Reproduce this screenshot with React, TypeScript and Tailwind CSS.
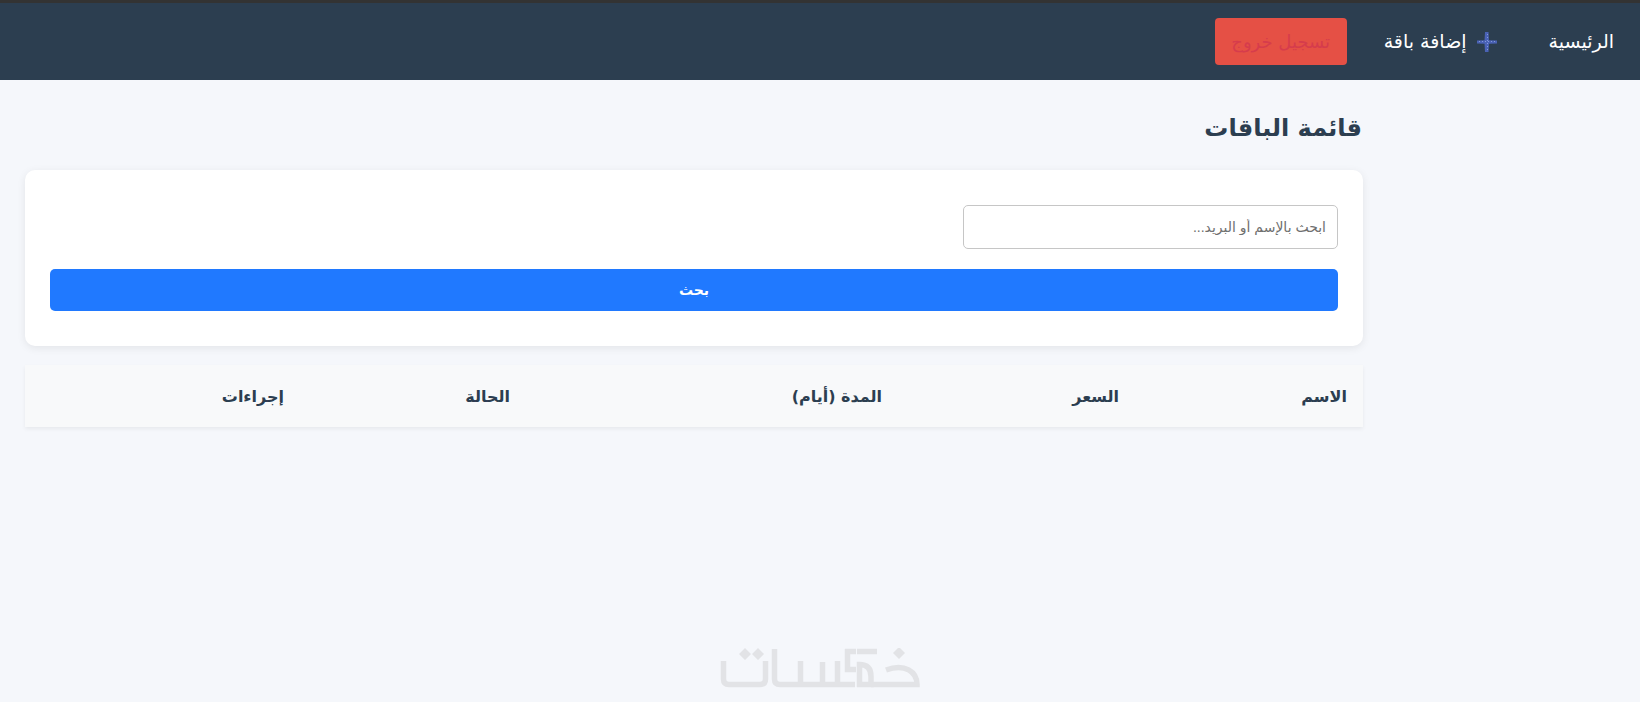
import React from "react";

const font = { fontFamily: '"DejaVu Sans", "Noto Sans", sans-serif' };

function Plus() {
  return (
    <svg width="20" height="20" viewBox="0 0 20 20" className="shrink-0">
      <path d="M8 0h3.500l.5 8.200 8 .2v3.200l-8 .2-.5 8.200H8l-.5-8.200-7.500-.2V8.400l7.500-.2z" fill="#4a62b5" />
      <path d="M10.500 2v16M2 9.500h16" stroke="#9fb0e8" strokeWidth="0.700" strokeDasharray="1 2" fill="none" />
    </svg>
  );
}

function Logo() {
  return (
    <svg width="200" height="42" viewBox="0 0 200 42" fill="none" stroke="#e2e3e6" strokeWidth="5.500">
      <path d="M3.500 13 V31 q0 5.500 5.500 5.500 H40 q5.500 0 5.500 -5.500 V13" />
      <path d="M54.500 1 V31 q0 5.500 5.500 5.500 H135" />
      <path d="M80.500 13 V36" />
      <path d="M102.500 14 V36" />
      <path d="M117.500 13 V36" />
      <path d="M125 3.500 H136" />
      <path d="M127.500 1 V21.500 H136" />
      <path d="M137 3.500 H157" />
      <path d="M139.500 39 V16.500 q11.500 0 11.500 12 V36.500 H137" />
      <path d="M151 36.500 H197 C197 24 185 15 166 22" />
      <path d="M19 6 l6 -6 6 6 -6 6z M32 6 l6 -6 6 6 -6 6z" fill="#e2e3e6" stroke="none" />
      <path d="M173 5 l6 -6 6 6 -6 6z" fill="#e2e3e6" stroke="none" />
    </svg>
  );
}

export default function App() {
  const cols = ["الاسم", "السعر", "المدة (أيام)", "الحالة", "إجراءات"];
  return (
    <div dir="rtl" style={font} className="h-[702px] overflow-hidden bg-[#f5f7fb] flex flex-col">
      <header className="h-[80px] shrink-0 border-t-[3px] border-[#333333] bg-[#2c3e50] flex items-center pr-[26px] text-white text-[19px]">
        <a className="ml-[52px]">الرئيسية</a>
        <a className="ml-[37px] flex items-center gap-[10px]">
          <Plus />
          <span>إضافة باقة</span>
        </a>
        <button className="h-[47px] w-[132px] rounded-[4px] bg-[#e55045] text-[#d63c4c] text-[18px]">تسجيل خروج</button>
      </header>

      <main className="flex-1 w-[1338px] mr-[277px] flex flex-col">
        <h2 className="mt-[30px] mr-[1px] text-[24px] leading-[36px] font-bold text-[#2c3e50]">قائمة الباقات</h2>

        <section className="mt-[24px] h-[176px] rounded-[10px] bg-white shadow-[0_2px_8px_rgba(0,0,0,0.08)] px-[25px] pt-[35px]">
          <input
            dir="rtl"
            placeholder="ابحث بالإسم أو البريد..."
            style={{ fontFamily: '"Liberation Sans", "DejaVu Sans", sans-serif' }}
            className="block w-[375px] h-[44px] rounded-[5px] border border-[#c6c6c6] bg-white px-[11px] text-[14px] placeholder:text-[#6f6f6f] outline-none"
          />
          <button className="mt-[20px] block w-full h-[42px] rounded-[5px] bg-[#2079ff] text-white text-[14px] font-bold">بحث</button>
        </section>

        <div className="mt-[19px] h-[62px] pt-[2px] bg-[#f8f9fa] shadow-[0_2px_4px_rgba(0,0,0,0.06)] grid grid-cols-[228px_237px_372px_226px_275px] items-center text-[16px] font-bold text-[#2c3e50]">
          {cols.map((c) => (
            <div key={c} className="pr-[16px]">{c}</div>
          ))}
        </div>
      </main>

      <div className="absolute left-[720px] top-[648px]">
        <Logo />
      </div>
    </div>
  );
}
